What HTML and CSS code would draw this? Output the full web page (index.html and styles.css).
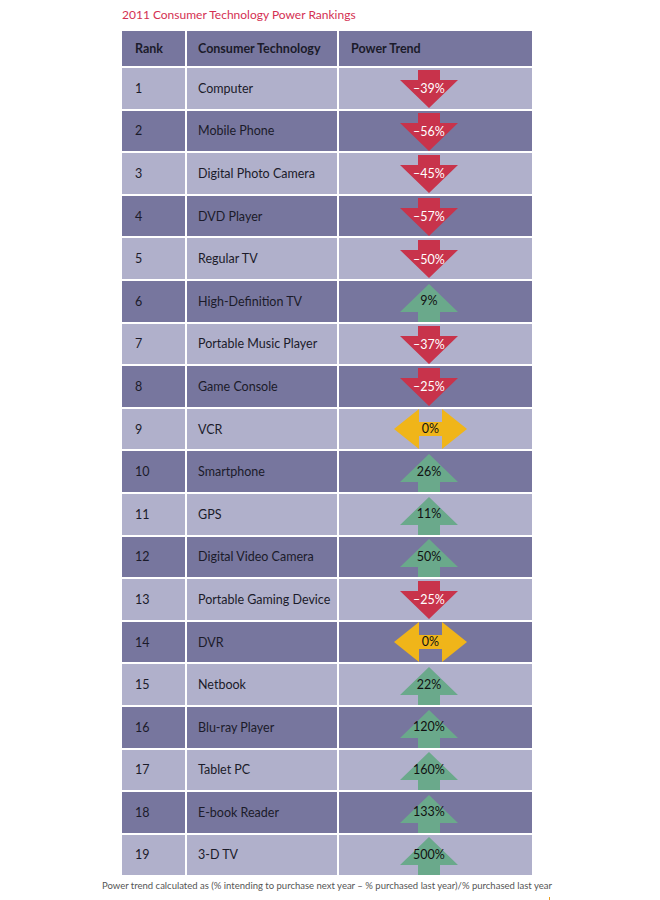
FILE: index.html
```html
<!DOCTYPE html>
<html>
<head>
<meta charset="utf-8">
<link rel="stylesheet" href="styles.css">
</head>
<body>
<div class="page">
  <h1 class="title">2011 Consumer Technology Power Rankings</h1>
  <div class="table">
    <div class="row head"><div class="c rank">Rank</div><div class="c tech">Consumer Technology</div><div class="c trend">Power Trend</div></div>
  </div>
  <p class="note">Power trend calculated as (% intending to purchase next year – % purchased last year)/% purchased last year</p>
  <div class="tick"></div>
</div>
<script src="app.js"></script>
</body>
</html>
```
FILE: app.js
```js
const data = [
  [1,"Computer","d","-39%"],[2,"Mobile Phone","d","-56%"],[3,"Digital Photo Camera","d","-45%"],
  [4,"DVD Player","d","-57%"],[5,"Regular TV","d","-50%"],[6,"High-Definition TV","u","9%"],
  [7,"Portable Music Player","d","-37%"],[8,"Game Console","d","-25%"],[9,"VCR","n","0%"],
  [10,"Smartphone","u","26%"],[11,"GPS","u","11%"],[12,"Digital Video Camera","u","50%"],
  [13,"Portable Gaming Device","d","-25%"],[14,"DVR","n","0%"],[15,"Netbook","u","22%"],
  [16,"Blu-ray Player","u","120%"],[17,"Tablet PC","u","160%"],[18,"E-book Reader","u","133%"],
  [19,"3-D TV","u","500%"]
];
const shapes = {
  d: '<svg class="arr" width="58" height="38" viewBox="0 0 58 38"><polygon points="18,0 40,0 40,10 58,10 29,38 0,10 18,10" fill="#c8334b"/></svg>',
  u: '<svg class="arr" width="58" height="38" viewBox="0 0 58 38"><polygon points="29,0 58,28 40,28 40,38 18,38 18,28 0,28" fill="#6aa98b"/></svg>',
  n: '<svg class="arr" width="73" height="40" viewBox="0 0 73 40"><polygon points="0,20 25,0 25,13 48,13 48,0 73,20 48,40 48,27 25,27 25,40" fill="#f0b519"/></svg>'
};
const t = document.querySelector('.table');
data.forEach((r,i)=>{
  const row = document.createElement('div');
  row.className = 'row ' + (i%2===0 ? 'light' : 'dark');
  row.innerHTML = `<div class="c rank">${r[0]}</div><div class="c tech">${r[1]}</div>` +
    `<div class="c trend"><div class="badge ${r[2]}">${shapes[r[2]]}<span class="val">${r[3].replace('-','–')}</span></div></div>`;
  t.appendChild(row);
});
```
FILE: styles.css
```css
html, body { margin: 0; padding: 0; background: #fff; }
.page { width: 660px; height: 900px; font-family: "Lato", "Open Sans", sans-serif; color: #1b1b2a; }
.title { margin: 0; padding: 7px 0 0 122px; height: 31px; box-sizing: border-box; font-size: 12px; font-weight: 400; color: #d42f52; line-height: 16px; }
.table { margin-left: 122px; width: 410px; display: flex; flex-direction: column; gap: 2px; }
.row { display: grid; grid-template-columns: 63px 150px 193px; column-gap: 2px; height: 40.6px; }
.row.head { height: 35px; }
.row.head .c { background: #77769e; font-weight: 700; font-size: 12.5px; }
.row.dark .c { background: #77769e; }
.row.light .c { background: #b0b0cb; }
.c { display: flex; align-items: center; font-size: 12.5px; }
.rank { padding-left: 13px; }
.tech { padding-left: 11px; }
.row.head .trend { padding-left: 12px; }
.row:not(.head) .trend { justify-content: flex-start; padding-left: 61px; align-items: stretch; }
.badge { display: grid; place-items: center; width: 58px; }
.badge > * { grid-area: 1 / 1; }
.badge.d { align-items: start; padding-top: 2px; }
.badge.d .val { align-self: center; }
.badge.u { align-items: end; }
.badge.u .val { align-self: center; }
.badge.n { width: 73px; margin-left: -6px; }
.val { font-size: 12.5px; line-height: 14px; }
.badge.d .val { color: #fff; }
.badge.u .val, .badge.n .val { color: #111; }
.note { margin: 5px 0 0 102px; font-size: 9.5px; color: #555; line-height: 12px; white-space: nowrap; }
.tick { margin: 5px 0 0 549px; width: 1px; height: 4px; background: #f0a020; }
```
